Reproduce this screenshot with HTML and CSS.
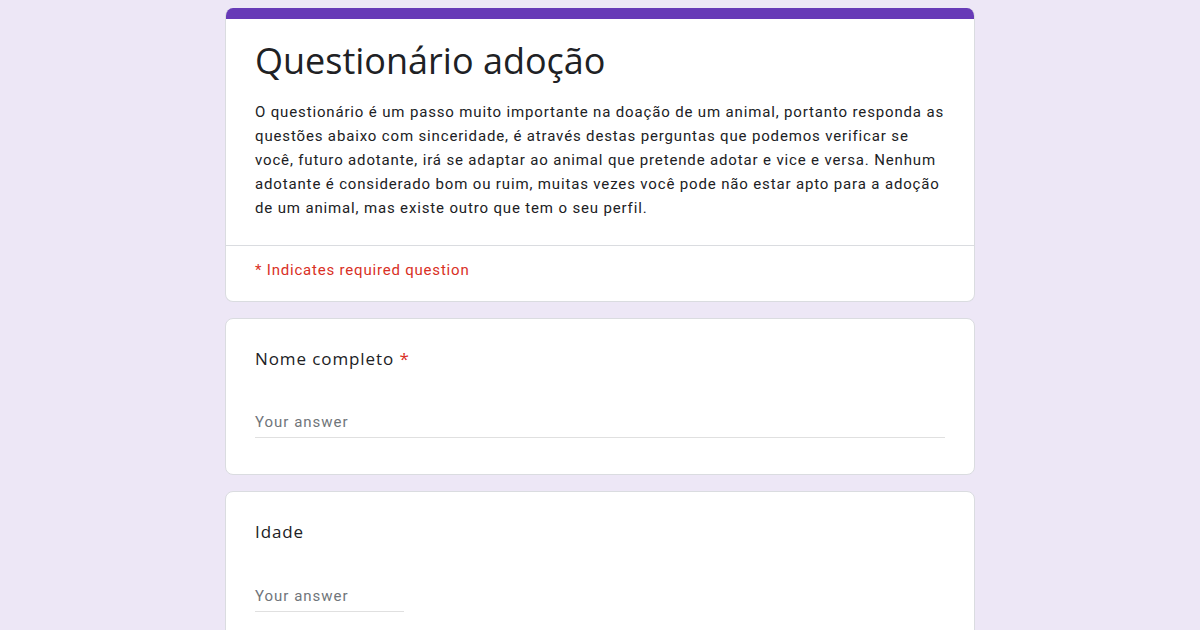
FILE: index.html
```html
<!DOCTYPE html>
<html lang="pt">
<head>
<meta charset="utf-8">
<title>Questionário adoção</title>
<link rel="stylesheet" href="styles.css">
</head>
<body>
<main class="form">
  <section class="card header-card">
    <div class="accent"></div>
    <div class="header-body">
      <h1 class="title">Questionário adoção</h1>
      <p class="desc">O questionário é um passo muito importante na doação de um animal, portanto responda as questões abaixo com sinceridade, é através destas perguntas que podemos verificar se você, futuro adotante, irá se adaptar ao animal que pretende adotar e vice e versa. Nenhum adotante é considerado bom ou ruim, muitas vezes você pode não estar apto para a adoção de um animal, mas existe outro que tem o seu perfil.</p>
    </div>
    <div class="required-note">* Indicates required question</div>
  </section>

  <section class="card question">
    <div class="q-label">Nome completo <span class="star">*</span></div>
    <div class="answer answer-wide">Your answer</div>
  </section>

  <section class="card question">
    <div class="q-label">Idade</div>
    <div class="answer answer-short">Your answer</div>
  </section>
</main>
</body>
</html>
```

FILE: styles.css
```css
* { box-sizing: border-box; }
html, body { margin: 0; padding: 0; }
body {
  background: #ede7f6;
  font-family: Roboto, "Liberation Sans", sans-serif;
  color: #202124;
  height: 630px;
  overflow: hidden;
}
.form {
  width: 750px;
  margin: 0 auto;
  padding-top: 8px;
  display: flex;
  flex-direction: column;
  gap: 16px;
}
.card {
  background: #fff;
  border: 1px solid #dadce0;
  border-radius: 8px;
}
.header-card {
  border-top: none;
  overflow: hidden;
}
.accent {
  height: 11px;
  background: #673ab7;
  margin: 0 -1px;
}
.header-body {
  padding: 20px 29px 25px;
  border-bottom: 1px solid #dadce0;
}
.title {
  margin: 0;
  font-family: "Open Sans", Roboto, sans-serif;
  font-weight: 400;
  font-size: 36px;
  line-height: 44px;
  color: #202124;
}
.desc {
  margin: 17px 0 0;
  font-size: 15px;
  line-height: 24px;
  letter-spacing: 0.85px;
}
.required-note {
  padding: 14px 29px 21px;
  font-size: 15px;
  line-height: 20px;
  letter-spacing: 0.8px;
  color: #d93025;
}
.question {
  padding: 28px 29px 36px;
}
.q-label {
  font-family: "Open Sans", Roboto, sans-serif;
  font-size: 17px;
  line-height: 24px;
  letter-spacing: 0.9px;
}
.star { color: #d93025; }
.answer {
  margin-top: 40px;
  font-size: 15px;
  line-height: 22px;
  color: #70757a;
  letter-spacing: 1px;
  padding-bottom: 4px;
  border-bottom: 1px solid #e0e0e0;
}
.answer-short { width: 149px; margin-top: 41px; }
```
